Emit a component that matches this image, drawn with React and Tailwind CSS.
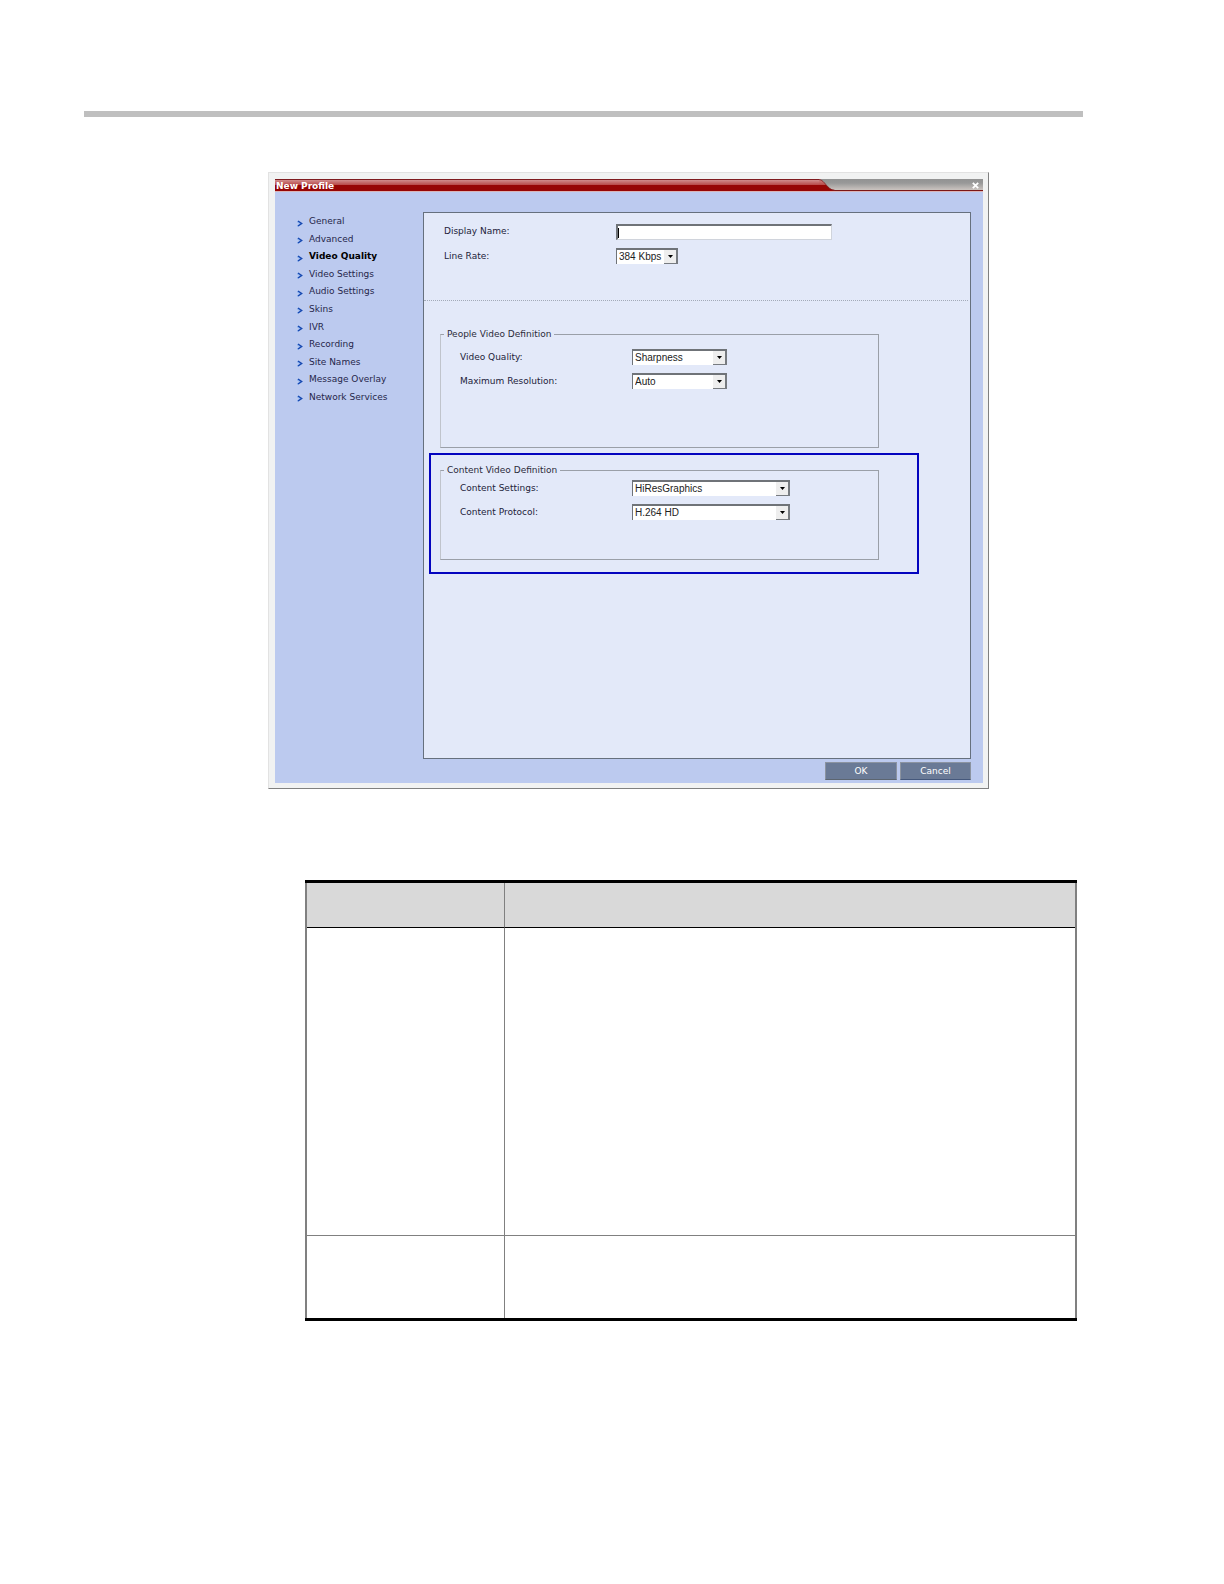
import React, { useState } from "react";
import { clsx } from "clsx";

const sections = [
  "General",
  "Advanced",
  "Video Quality",
  "Video Settings",
  "Audio Settings",
  "Skins",
  "IVR",
  "Recording",
  "Site Names",
  "Message Overlay",
  "Network Services",
];

const Chevron = () => (
  <svg className="mt-1 h-[7px] w-[6px] shrink-0" viewBox="0 0 6 7" fill="none" aria-hidden="true">
    <path d="M0.3 1.6 L3.6 4 L0.3 6.4" stroke="#8fb4f0" strokeWidth="1.4" />
    <path d="M1 1 L4.6 3.5 L1 6" stroke="#1648b0" strokeWidth="1.5" />
  </svg>
);

const SelectField = ({ id, label, options, width }) => (
  <div className="flex items-start">
    <label htmlFor={id} className="w-[172px] shrink-0 leading-4">{label}</label>
    <div className={clsx("relative h-4", width)}>
      <select
        id={id}
        className="block h-4 w-full appearance-none border-t-2 border-l border-[#6f7378] bg-white pl-[2px] font-['Liberation_Sans',sans-serif] text-[10px] leading-[14px] text-[#222] outline-none"
      >
        {options.map((option) => (
          <option key={option}>{option}</option>
        ))}
      </select>
      <span className="pointer-events-none absolute top-[2px] right-0 bottom-0 flex w-[14px] items-center justify-center border-r-2 border-b border-[#777b80] bg-[#eeeeee]">
        <svg className="h-[3px] w-[5px]" viewBox="0 0 5 3" aria-hidden="true">
          <path d="M0 0 H5 L2.5 3 Z" fill="#000" />
        </svg>
      </span>
    </div>
  </div>
);

const Group = ({ title, className, children }) => (
  <fieldset className={clsx("border border-[#9a9fa8] border-l-[#c0c4cc]", className)}>
    <legend className="ml-[3px] px-[3px] leading-3 text-[#2b2b3a]">{title}</legend>
    {children}
  </fieldset>
);

const TitleBar = () => (
  <header className="flex h-[13px] items-stretch border-b border-[#d9b4b8] bg-[linear-gradient(#929292_0,#989898_4px,#cbc4c0_11px,#7c1515_11px)]">
    <h1 className="flex-1 bg-[linear-gradient(#7f1c20_0,#7f1c20_1px,#d08c8c_1px,#b84848_6px,#960505_6px)] pt-px pl-px text-[9px] leading-3 font-bold text-white">
      New Profile
    </h1>
    <svg className="h-3 w-4" viewBox="0 0 16 12" preserveAspectRatio="none" aria-hidden="true">
      <defs>
        <linearGradient id="swoosh" x1="0" y1="0" x2="0" y2="1">
          <stop offset="0" stopColor="#d08c8c" />
          <stop offset="0.5" stopColor="#b84848" />
          <stop offset="0.5" stopColor="#960505" />
        </linearGradient>
      </defs>
      <path d="M0 0 C6 1 8 11 16 11 V12 H0 Z" fill="url(#swoosh)" />
      <path d="M0 0.5 C6 1 8 11 16 11.5" fill="none" stroke="#7f1c20" strokeWidth="0.8" />
    </svg>
    <div className="flex w-[148px] justify-end pr-1">
      <button type="button" aria-label="Close" className="flex w-2 items-center justify-center">
        <svg className="h-[7px] w-[7px]" viewBox="0 0 7 7" aria-hidden="true">
          <path d="M0.8 0.8 L6.2 6.2 M6.2 0.8 L0.8 6.2" stroke="#fff" strokeWidth="1.8" />
        </svg>
      </button>
    </div>
  </header>
);

const Sidebar = ({ active, onSelect }) => (
  <nav aria-label="Profile sections" className="w-[148px] shrink-0 pt-px pl-[22px]">
    <ul className="flex h-48 flex-col justify-between">
      {sections.map((name) => (
        <li key={name}>
          <a
            href="#"
            onClick={(e) => {
              e.preventDefault();
              onSelect(name);
            }}
            className={clsx(
              "flex items-center gap-[6px] leading-4 whitespace-nowrap",
              name === active ? "font-bold text-black" : "text-[#26264a]"
            )}
          >
            <Chevron />
            {name}
          </a>
        </li>
      ))}
    </ul>
  </nav>
);

const ProfileDialog = () => {
  const [active, setActive] = useState("Video Quality");

  return (
    <section className="border border-t-[#e2e2e2] border-r-[#808080] border-b-[#808080] border-l-[#e2e2e2] bg-[#f1f2f2] pt-[6px] pr-[5px] pb-[5px] pl-[6px] font-['DejaVu_Sans',sans-serif] text-[9px] text-[#22223a]">
      <div className="bg-[#bccaef]">
        <TitleBar />
        <div className="flex pt-5 pr-3">
          <Sidebar active={active} onSelect={setActive} />
          <form className="min-h-[547px] flex-1 border border-[#66707e] bg-[#e3e9f9]">
            <div className="flex flex-col gap-2 pt-[11px] pl-5">
              <div className="flex items-start">
                <label htmlFor="display-name" className="w-[172px] shrink-0 leading-[14px]">Display Name:</label>
                <div className="flex h-4 w-[216px] items-center border-t-2 border-r border-b border-l-2 border-t-[#6f7378] border-r-[#d0d4dc] border-b-[#d0d4dc] border-l-[#6f7378] bg-white">
                  <span className="h-[10px] w-px bg-black" />
                  <input id="display-name" type="text" className="h-3 w-full bg-transparent outline-none" />
                </div>
              </div>
              <SelectField id="line-rate" label="Line Rate:" options={["384 Kbps"]} width="w-[62px]" />
            </div>

            <hr className="mt-9 mr-[2px] border-t border-dotted border-[#a3aab8]" />

            <Group title="People Video Definition" className="mt-[27px] mr-[91px] ml-4 h-[120px]">
              <div className="flex flex-col gap-2 pt-[9px] pl-[19px]">
                <SelectField id="video-quality" label="Video Quality:" options={["Sharpness"]} width="w-[95px]" />
                <SelectField id="max-resolution" label="Maximum Resolution:" options={["Auto"]} width="w-[95px]" />
              </div>
            </Group>

            <div className="mt-[5px] mr-[51px] ml-[5px] border-2 border-[#0404bf] pt-[9px] pr-[38px] pb-3 pl-[9px]">
              <Group title="Content Video Definition" className="h-24">
                <div className="flex flex-col gap-2 pt-1 pl-[19px]">
                  <SelectField id="content-settings" label="Content Settings:" options={["HiResGraphics"]} width="w-[158px]" />
                  <SelectField id="content-protocol" label="Content Protocol:" options={["H.264 HD"]} width="w-[158px]" />
                </div>
              </Group>
            </div>
          </form>
        </div>
        <footer className="flex justify-end gap-[3px] pt-[3px] pr-3 pb-[3px]">
          <button type="button" className="h-[18px] w-[72px] border border-[#8b93a0] border-b-[#5c6570] bg-[#6a7a96] leading-4 text-white">
            OK
          </button>
          <button type="button" className="h-[18px] w-[71px] border border-[#8b93a0] border-b-[#45587c] bg-[#6a7a96] leading-4 text-white">
            Cancel
          </button>
        </footer>
      </div>
    </section>
  );
};

const DescriptionTable = () => (
  <div className="border-y-[3px] border-black">
    <table
      aria-label="Field descriptions"
      className="w-full table-fixed border-separate border-spacing-0 border-x-2 border-[#808080]"
    >
      <colgroup>
        <col className="w-[198px]" />
        <col />
      </colgroup>
      <thead>
        <tr className="h-[45px] bg-[#d9d9d9]">
          <th className="border-r border-b border-r-[#808080] border-b-black" />
          <th className="border-b border-black" />
        </tr>
      </thead>
      <tbody>
        <tr className="h-[308px]">
          <td className="border-r border-b border-[#808080]" />
          <td className="border-b border-[#808080]" />
        </tr>
        <tr className="h-[82px]">
          <td className="border-r border-[#808080]" />
          <td />
        </tr>
      </tbody>
    </table>
  </div>
);

const App = () => {
  return (
    <main className="min-h-screen bg-white pt-[111px] pr-[141px] pb-16 pl-[84px]">
      <hr className="h-[6px] border-0 bg-[#bfbfbf]" />
      <div className="mt-[55px] mr-[94px] ml-[184px]">
        <ProfileDialog />
      </div>
      <div className="mt-[91px] mr-[6px] ml-[221px]">
        <DescriptionTable />
      </div>
    </main>
  );
};

export default App;
